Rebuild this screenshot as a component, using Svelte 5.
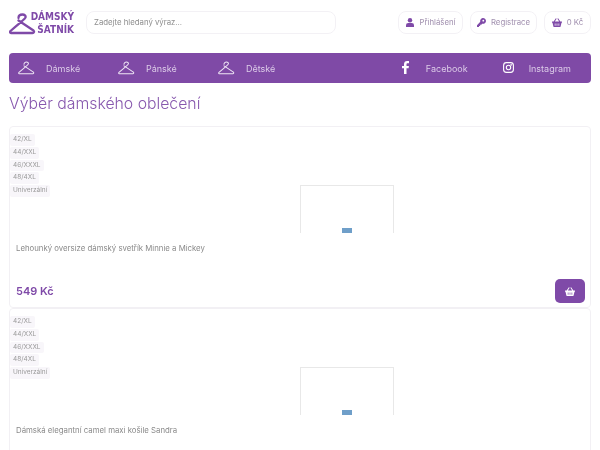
<script>
  const sizes = ['42/XL', '44/XXL', '46/XXXL', '48/4XL', 'Univerzální'];
  const nav = ['Dámské', 'Pánské', 'Dětské'];
  const products = [
    { name: 'Lehounký oversize dámský svetřík Minnie a Mickey', price: '549 Kč' },
    { name: 'Dámská elegantní camel maxi košile Sandra' }
  ];
  const hangerPath = 'M9.5 5C9.500 2.500 11.500 1.500 13.500 1.500C15.500 1.500 17 3 16.500 4.500C16 6 14 7 1.500 18C.8 19 1 20 2 20H23.500C25 20 25.500 18.500 24.500 17.500L9.500 7.500';
</script>

{#snippet basket()}
  <svg width="10" height="9" viewBox="0 0 22 20" fill="currentColor">
    <path d="M0 8h3.600L8.500 0.500l1.800 1.100L6.100 8h9.800L11.700 1.600l1.800-1.100L18.400 8H22v2.500h-1L19 19a1 1 0 0 1-1 1H4a1 1 0 0 1-1-1L1 10.500H0zM6 12v5h1.600v-5zm4.200 0v5h1.600v-5zm4.200 0v5H16v-5z" fill-rule="evenodd" />
  </svg>
{/snippet}

<div class="page">
  <header class="top">
    <div class="logo">
      <svg class="logo-mark" width="27" height="22" viewBox="0 0 27 22" fill="none" stroke="currentColor" stroke-width="2.300" stroke-linecap="round" stroke-linejoin="round">
        <path d={hangerPath} />
      </svg>
      <div class="logo-text"><span>DÁMSKÝ</span><span>ŠATNÍK</span></div>
    </div>
    <div class="search">Zadejte hledaný výraz...</div>
    <div class="actions">
      <div class="pill login">
        <svg width="8" height="9" viewBox="0 0 18 20" fill="currentColor"><circle cx="9" cy="5" r="5" /><path d="M0 20v-4a5 5 0 0 1 5-5h8a5 5 0 0 1 5 5v4z" /></svg>
        <span>Přihlášení</span>
      </div>
      <div class="pill register">
        <svg width="9" height="9" viewBox="0 0 20 20" fill="currentColor"><path d="M20 6.500a6.500 6.500 0 0 1-8.500 6.200L9.500 15H7v2.500H4.500V20H0v-4l7.300-7.500A6.500 6.500 0 1 1 20 6.500zM14 4a2 2 0 1 0 0 4 2 2 0 0 0 0-4z" fill-rule="evenodd" /></svg>
        <span>Registrace</span>
      </div>
      <div class="pill cart">
        {@render basket()}
        <span>0 Kč</span>
      </div>
    </div>
  </header>

  <nav class="menu">
    {#each nav as item}
      <div class="menu-item">
        <svg class="hanger" width="17" height="14" viewBox="0 0 27 22" fill="none" stroke="currentColor" stroke-width="1.600" stroke-linecap="round" stroke-linejoin="round"><path d={hangerPath} /></svg>
        <span>{item}</span>
      </div>
    {/each}
    <div class="social">
      <div class="social-item fb">
        <svg width="7" height="13" viewBox="0 0 7 13" fill="#fff"><path d="M2 13V7.300H0V5h2V3.300C2 1.200 3.200 0 5.100 0c.9 0 1.600.1 1.900.1v2.100H5.700c-1 0-1.200.5-1.200 1.200V5h2.400l-.3 2.300H4.500V13z" /></svg>
        <span>Facebook</span>
      </div>
      <div class="social-item">
        <svg class="ig" width="11" height="11" viewBox="0 0 11 11" fill="none" stroke="#fff" stroke-width="1.100"><rect x="0.600" y="0.600" width="9.800" height="9.800" rx="2.800" /><circle cx="5.500" cy="5.500" r="2.200" /><circle cx="8.200" cy="2.800" r="0.300" fill="#fff" /></svg>
        <span>Instagram</span>
      </div>
    </div>
  </nav>

  <h1>Výběr dámského oblečení</h1>

  {#each products as p}
    <article class="card">
      <ul class="tags">
        {#each sizes as s}<li>{s}</li>{/each}
      </ul>
      <div class="media">
        <div class="frame"><i></i></div>
      </div>
      <p class="name">{p.name}</p>
      {#if p.price}
        <div class="foot">
          <strong>{p.price}</strong>
          <button aria-label="Koupit">{@render basket()}</button>
        </div>
      {/if}
    </article>
  {/each}
</div>

<style>
  :global(body) {
    margin: 0;
    background: #fff;
    overflow: hidden;
  }
  .page {
    box-sizing: border-box;
    width: 600px;
    height: 450px;
    overflow: hidden;
    padding: 11px 9px 0;
    font-family: Inter, "Liberation Sans", sans-serif;
    color: #8a8a8a;
    filter: blur(0.35px);
  }
  .top {
    display: flex;
    align-items: center;
    height: 22px;
  }
  .logo {
    display: flex;
    align-items: center;
    width: 65px;
    margin-right: 12px;
    color: #7f4aa8;
  }
  .logo-mark {
    flex: none;
    margin-top: 4px;
    margin-right: -6px;
  }
  .logo-text {
    display: flex;
    flex-direction: column;
    align-items: flex-end;
    flex: 1;
    margin-top: 1px;
    font-family: "DejaVu Sans Condensed", "DejaVu Sans", sans-serif;
    font-stretch: condensed;
    font-weight: 700;
    font-size: 10px;
    line-height: 13px;
  }
  .search {
    box-sizing: border-box;
    width: 250px;
    height: 23px;
    border: 1px solid #f3f1f5;
    border-radius: 8px;
    padding-left: 7px;
    font-size: 7.800px;
    line-height: 21px;
    color: #8d8d8d;
  }
  .actions {
    display: flex;
    gap: 7px;
    margin-left: auto;
  }
  .pill {
    box-sizing: border-box;
    display: flex;
    align-items: center;
    justify-content: center;
    gap: 6px;
    height: 23px;
    border: 1px solid #f3f1f5;
    border-radius: 8px;
    font-size: 7.800px;
    color: #a08fae;
  }
  .login { width: 65px; }
  .register { width: 67px; gap: 5px; }
  .cart { width: 47px; gap: 5px; }
  .pill svg {
    color: #7f4aa8;
  }
  .menu {
    display: flex;
    align-items: center;
    height: 30px;
    margin-top: 20px;
    padding-left: 9px;
    border-radius: 4px;
    background: #7f4aa6;
    color: #dccbe8;
    font-size: 9px;
  }
  .menu-item {
    display: flex;
    align-items: center;
    gap: 11px;
    width: 100px;
  }
  .hanger {
    color: #efe6f5;
  }
  .social {
    display: flex;
    margin-left: auto;
    margin-right: 20px;
    gap: 35px;
  }
  .social-item {
    display: flex;
    align-items: center;
    gap: 15px;
  }
  .fb {
    gap: 17px;
  }
  .social-item svg {
    margin-top: -2px;
  }
  h1 {
    margin: 11px 0 12px;
    font-size: 15.800px;
    line-height: 20px;
    font-weight: 300;
    color: #8758ae;
  }
  .card {
    position: relative;
    box-sizing: border-box;
    height: 182px;
    border: 1px solid #f2f0f4;
    border-radius: 4px;
    padding-top: 6px;
  }
  .tags {
    position: absolute;
    top: 7px;
    left: 0;
    margin: 0;
    padding: 0;
    list-style: none;
    display: flex;
    flex-direction: column;
    align-items: flex-start;
    gap: 1px;
  }
  .tags li {
    padding: 0 3px;
    height: 11.800px;
    line-height: 11.800px;
    border-radius: 2px;
    background: #f8f6fa;
    font-size: 6.500px;
    color: #9a9a9a;
  }
  .media {
    display: flex;
    justify-content: center;
    height: 100px;
    margin-left: 94px;
    overflow: hidden;
    align-items: flex-end;
  }
  .frame {
    position: relative;
    box-sizing: border-box;
    flex: none;
    width: 94px;
    height: 48px;
    border: 1px solid #e8e8e8;
    border-bottom: 0;
  }
  .frame i {
    position: absolute;
    bottom: 0;
    left: 41px;
    width: 10px;
    height: 5px;
    background: #6f9fc9;
  }
  .name {
    margin: 9px 0 0 6px;
    font-size: 7.800px;
    line-height: 12px;
    color: #8a8a8a;
  }
  .foot {
    display: flex;
    align-items: center;
    justify-content: space-between;
    margin-top: 25px;
    padding: 0 5px 0 6px;
  }
  .foot strong {
    font-size: 11px;
    font-weight: 600;
    color: #7f4aa8;
  }
  button {
    display: flex;
    align-items: center;
    justify-content: center;
    width: 30px;
    height: 24px;
    padding: 0;
    border: 0;
    border-radius: 5px;
    background: #7f4aa8;
    color: #fff;
  }
</style>
